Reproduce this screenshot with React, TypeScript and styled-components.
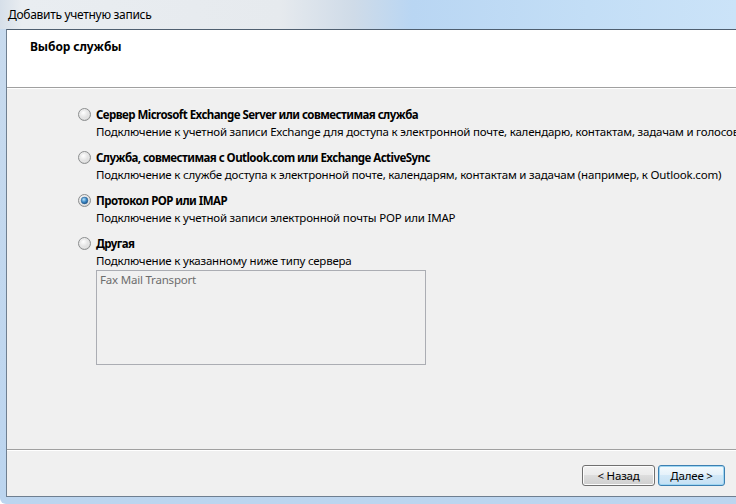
import React, { useState } from "react";
import styled, { createGlobalStyle } from "styled-components";

const GlobalStyle = createGlobalStyle`
  html, body {
    margin: 0;
    padding: 0;
    overflow: hidden;
  }
  body {
    font-family: "Noto Sans", "Open Sans", "DejaVu Sans", sans-serif;
    font-size: 11.5px;
    letter-spacing: -0.2px;
    color: #000;
  }
`;

const options = [
  {
    id: "exchange",
    title: "Сервер Microsoft Exchange Server или совместимая служба",
    desc: "Подключение к учетной записи Exchange для доступа к электронной почте, календарю, контактам, задачам и голосовой почте",
  },
  {
    id: "eas",
    title: "Служба, совместимая с Outlook.com или Exchange ActiveSync",
    desc: "Подключение к службе доступа к электронной почте, календарям, контактам и задачам (например, к Outlook.com)",
  },
  {
    id: "pop",
    title: "Протокол POP или IMAP",
    desc: "Подключение к учетной записи электронной почты POP или IMAP",
  },
  {
    id: "other",
    title: "Другая",
    desc: "Подключение к указанному ниже типу сервера",
  },
];

function Radio({ checked }: { checked: boolean }) {
  return (
    <svg width="13" height="13" viewBox="0 0 13 13">
      <defs>
        <radialGradient id="rbg" cx="40%" cy="35%" r="70%">
          <stop offset="0%" stopColor="#ffffff" />
          <stop offset="100%" stopColor="#cfcfcf" />
        </radialGradient>
        <radialGradient id="rdot" cx="40%" cy="35%" r="70%">
          <stop offset="0%" stopColor="#b8e4fb" />
          <stop offset="55%" stopColor="#3a86c4" />
          <stop offset="100%" stopColor="#1c4f82" />
        </radialGradient>
      </defs>
      <circle cx="6.5" cy="6.5" r="6" fill="url(#rbg)" stroke="#8c8e8f" strokeWidth="1" />
      <circle cx="6.5" cy="6.5" r="4.2" fill="none" stroke="#e8e8e8" strokeWidth="0.8" />
      {checked && <circle cx="6.5" cy="6.5" r="3.4" fill="url(#rdot)" stroke="#2b5f8e" strokeWidth="0.5" />}
    </svg>
  );
}

export default function App() {
  const [selected, setSelected] = useState("pop");

  return (
    <>
      <GlobalStyle />
      <Frame>
        <TitleBar>Добавить учетную запись</TitleBar>
        <Client>
          <Header>
            <HeaderTitle>Выбор службы</HeaderTitle>
          </Header>
          <Body>
            {options.map((o) => (
              <Option key={o.id}>
                <OptionLabel onClick={() => setSelected(o.id)}>
                  <Radio checked={selected === o.id} />
                  <span>{o.title}</span>
                </OptionLabel>
                <OptionDesc>{o.desc}</OptionDesc>
              </Option>
            ))}
            <ListBox>
              <ListItem>Fax Mail Transport</ListItem>
            </ListBox>
          </Body>
          <Footer>
            <Button>&lt; Назад</Button>
            <Button primary>Далее &gt;</Button>
          </Footer>
        </Client>
      </Frame>
    </>
  );
}

const Frame = styled.div`
  width: 736px;
  height: 504px;
  display: flex;
  flex-direction: column;
  background: linear-gradient(180deg, #c9dbee 0%, #bcd5ef 100%);
  border-bottom-left-radius: 6px;
  overflow: hidden;
`;

const TitleBar = styled.div`
  height: 29px;
  flex-shrink: 0;
  display: flex;
  align-items: center;
  padding-left: 8px;
  padding-bottom: 1px;
  box-sizing: border-box;
  font-size: 12px;
  letter-spacing: -0.3px;
  color: #000;
  background: linear-gradient(
    90deg,
    #d6dfe9 0%,
    #e9edf1 3%,
    #e6eaee 38%,
    #cfdbe8 48%,
    #b9d6f3 56%,
    #c3def6 80%,
    #cbe3f8 100%
  );
`;

const Client = styled.div`
  flex: 1;
  display: flex;
  flex-direction: column;
  margin-left: 6px;
  margin-bottom: 7px;
  border-top: 1px solid #4f5f70;
  border-left: 1px solid #6f7f90;
  border-bottom: 1px solid #6f7f90;
  background: #f0f0f0;
`;

const Header = styled.div`
  height: 58px;
  flex-shrink: 0;
  background: #fff;
  border-bottom: 1px solid #a0a0a0;
  box-sizing: border-box;
  padding: 8px 0 0 23px;
`;

const HeaderTitle = styled.div`
  font-weight: 700;
  font-size: 12px;
  letter-spacing: -0.1px;
  line-height: 17px;
`;

const Body = styled.div`
  flex: 1;
  padding: 17px 0 0 71px;
  border-bottom: 1px solid #a0a0a0;
  border-top: 1px solid #fff;
  overflow: hidden;
`;

const Option = styled.div`
  display: flex;
  flex-direction: column;
  margin-bottom: 8px;
  white-space: nowrap;
`;

const OptionLabel = styled.label`
  display: flex;
  align-items: center;
  gap: 5px;
  height: 17px;
  font-weight: 700;
  letter-spacing: -0.55px;
  cursor: pointer;
`;

const OptionDesc = styled.div`
  padding-left: 18px;
  line-height: 18px;
`;

const ListBox = styled.div`
  width: 330px;
  height: 95px;
  margin: -8px 0 0 18px;
  border: 1px solid #abadb3;
  background: #f0f0f0;
  box-sizing: border-box;
  padding: 1px 3px;
`;

const ListItem = styled.div`
  color: #6d6d6d;
  line-height: 15px;
`;

const Footer = styled.div`
  height: 46px;
  flex-shrink: 0;
  display: flex;
  justify-content: flex-end;
  align-items: flex-start;
  gap: 3px;
  padding: 14px 11px 0 0;
  box-sizing: border-box;
  border-top: 1px solid #fff;
`;

const Button = styled.button<{ primary?: boolean }>`
  height: 21px;
  width: ${(p) => (p.primary ? "67px" : "73px")};
  padding: 0;
  font-family: "Noto Sans", "Open Sans", sans-serif;
  font-size: 11.5px;
  letter-spacing: -0.2px;
  color: #000;
  border-radius: 3px;
  border: 1px solid ${(p) => (p.primary ? "#3c7fb1" : "#707070")};
  background: ${(p) =>
    p.primary
      ? "linear-gradient(180deg, #f4fafd 0%, #e4f1fa 48%, #d2e8f7 50%, #c4e0f4 100%)"
      : "linear-gradient(180deg, #f2f2f2 0%, #ebebeb 48%, #dddddd 50%, #cfcfcf 100%)"};
  box-shadow: inset 0 0 0 1px ${(p) => (p.primary ? "#9fd6f2" : "#fcfcfc")};
`;
